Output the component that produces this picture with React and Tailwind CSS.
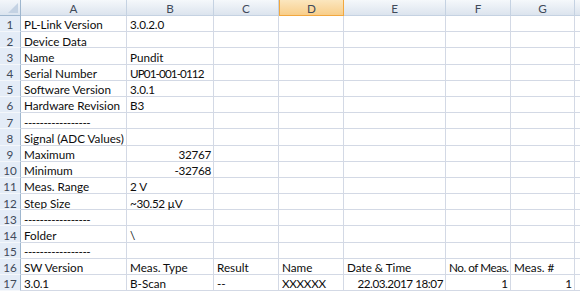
import React from "react";

const cols = [
  { key: "A", w: "w-[106px]" },
  { key: "B", w: "w-[87px]" },
  { key: "C", w: "w-[65px]" },
  { key: "D", w: "w-[65px]" },
  { key: "E", w: "w-[102px]" },
  { key: "F", w: "w-[65px]" },
  { key: "G", w: "w-[64px]" },
];

const DASHES = ["-----------------", "l", "tracking-[-0.45px]"];

// Each row: [text, align, extra classes] per column A..G
const rows = [
  [["PL-Link Version"], ["3.0.2.0", "l", "tracking-[-0.2px]"]],
  [["Device Data"]],
  [["Name"], ["Pundit"]],
  [["Serial Number"], ["UP01-001-0112", "l", "tracking-[-0.9px] overflow-visible"]],
  [["Software Version"], ["3.0.1", "l", "tracking-[-0.2px]"]],
  [["Hardware Revision"], ["B3"]],
  [DASHES],
  [["Signal (ADC Values)"]],
  [["Maximum"], ["32767", "r", "tracking-[-0.3px]"]],
  [["Minimum"], ["-32768", "r", "tracking-[-0.3px]"]],
  [["Meas. Range"], ["2 V"]],
  [["Step Size"], ["~30.52 µV", "l", "tracking-[-0.3px]"]],
  [DASHES],
  [["Folder"], ["\\"]],
  [DASHES],
  [
    ["SW Version"],
    ["Meas. Type"],
    ["Result"],
    ["Name"],
    ["Date & Time"],
    ["No. of Meas.", "l", "tracking-[-0.45px] overflow-visible"],
    ["Meas. #"],
  ],
  [
    ["3.0.1", "l", "tracking-[-0.2px]"],
    ["B-Scan"],
    ["--"],
    ["XXXXXX", "l", "tracking-[-0.3px]"],
    ["22.03.2017 18:07", "r", "tracking-[-0.45px]"],
    ["1", "r"],
    ["1", "r"],
  ],
];

function Cell({ col, data }) {
  const [text, align, extra = "overflow-hidden"] = data || [];
  return (
    <div
      className={`${col.w} shrink-0 h-full border-r border-b border-[#d3d9e5] flex items-end whitespace-nowrap ${
        align === "r" ? "justify-end pr-[2px]" : "pl-[3px]"
      } ${extra}`}
    >
      {text}
    </div>
  );
}

export default function App() {
  return (
    <div
      className="w-[580px] h-[296px] bg-white overflow-hidden text-[11.7px] text-[#0d0d0d] leading-none"
      style={{ fontFamily: "Lato, 'Open Sans', sans-serif" }}
    >
      {/* column header strip */}
      <div className="flex h-[16px] text-[#3f4a5a]">
        <div className="w-[21px] shrink-0 h-full relative border-r border-b border-[#9eb6ce] bg-gradient-to-b from-[#f3f6fa] to-[#dbe4ef]">
          <svg className="absolute right-[2px] bottom-[2px]" width="10" height="10" viewBox="0 0 10 10">
            <polygon points="10,0 10,10 0,10" fill="#c4d2e3" />
          </svg>
        </div>
        {cols.map((c) =>
          c.key === "D" ? (
            <div
              key={c.key}
              className={`${c.w} shrink-0 h-full flex items-center justify-center pt-[2px] border border-t-0 border-[#f2a83f] bg-gradient-to-b from-[#fbe6be] to-[#f8ce8a]`}
            >
              {c.key}
            </div>
          ) : (
            <div
              key={c.key}
              className={`${c.w} shrink-0 h-full flex items-center justify-center pt-[2px] border-r border-b border-[#c5d2e2] bg-gradient-to-b from-[#f5f8fb] to-[#dce4ee]`}
            >
              {c.key}
            </div>
          )
        )}
        <div className="flex-1 h-full border-b border-[#c5d2e2] bg-gradient-to-b from-[#f5f8fb] to-[#dce4ee]" />
      </div>

      {rows.map((r, i) => (
        <div key={i} className="flex h-[16.2px]">
          <div className="w-[21px] shrink-0 h-full flex items-end justify-center border-r border-b border-r-[#9eb6ce] border-b-[#f4f7fb] bg-[#e4ecf7] text-[#3f4a5a]">
            {i + 1}
          </div>
          {cols.map((c, j) => (
            <Cell key={c.key} col={c} data={r[j]} />
          ))}
          <div className="flex-1 h-full border-b border-[#d3d9e5]" />
        </div>
      ))}
    </div>
  );
}
